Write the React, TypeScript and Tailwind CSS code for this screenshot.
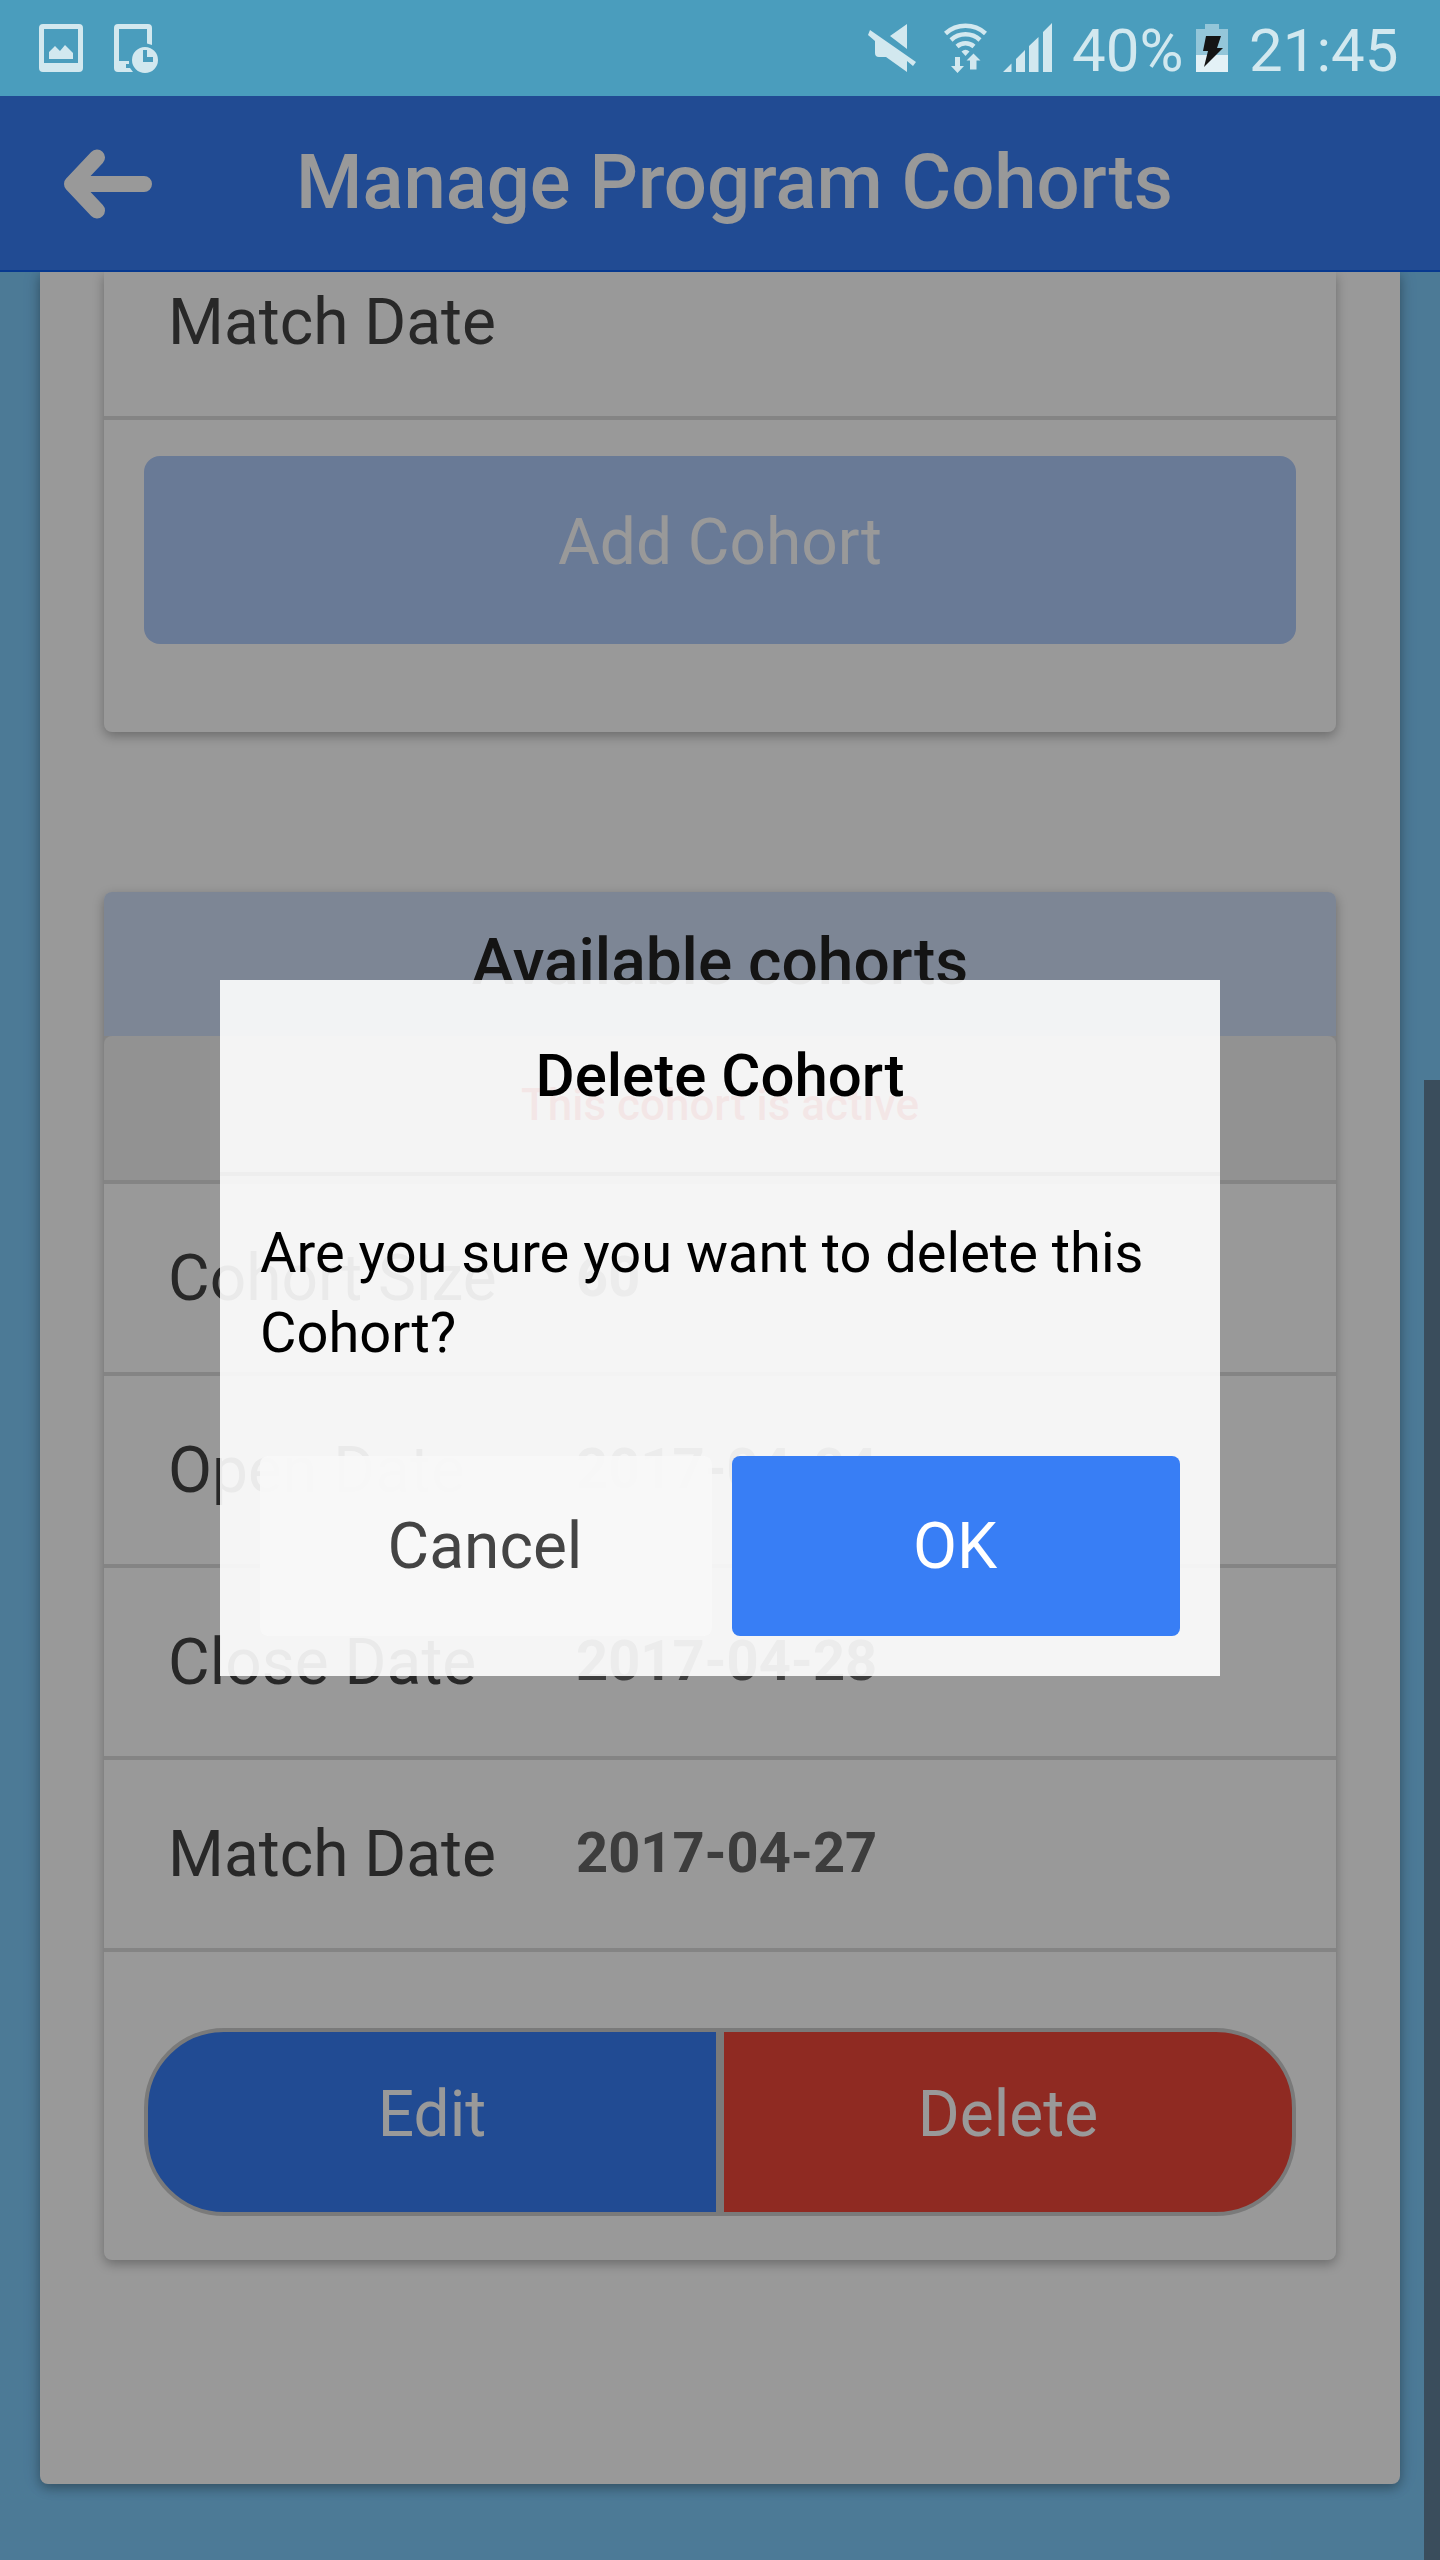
import React from "react";

function StatusBar() {
  return (
    <div className="flex h-24 shrink-0 items-start bg-[#4a9dbd] text-[#d2e8ef]">
      <svg className="h-24 w-[180px]" viewBox="0 0 180 96">
        <path fill="currentColor" fillRule="evenodd" d="M43 24h36a4 4 0 0 1 4 4v40a4 4 0 0 1-4 4H43a4 4 0 0 1-4-4V28a4 4 0 0 1 4-4zm1 5v34h34V29zM49 59v-7l6-6 5 5 5-6 8 8v6z" />
        <path fill="currentColor" d="M118 24h30a4 4 0 0 1 4 4v17l-5-1.500V29h-28v32h10v3h-3v4h4l3 4h-15a4 4 0 0 1-4-4V28a4 4 0 0 1 4-4z" />
        <path fill="currentColor" fillRule="evenodd" d="M145 47a13 13 0 1 1 0 26a13 13 0 0 1 0-26zm-2 3v12h10v-5h-6v-7z" />
      </svg>
      <svg className="ml-[660px] h-24 w-[220px]" viewBox="840 0 220 96">
        <g fill="currentColor">
          <path d="M907 24v25l-17-13zM870 30l46 32-3 4-6-5v11l-21-15h-7a4 4 0 0 1-4-4V41l-7-6z" />
        </g>
        <g fill="none" stroke="currentColor" strokeWidth="4.500">
          <path d="M945.500 33.500a30 30 0 0 1 40 0" />
          <path d="M951 40a21.500 21.500 0 0 1 29 0" />
          <path d="M957 46.500a13 13 0 0 1 17 0" />
        </g>
        <g fill="currentColor">
          <path d="M961.500 51.500q4-3.500 8 0l-4 4.500z" />
          <path d="M955 57h5v9h4l-6.500 7-6.500-7h4zM970 69.500h6.500v-9h4l-7-7-7 7h3.500z" />
          <path d="M1003 72h8.500v-8.500zM1016 72h9V50l-9 9zM1029 72h9.500V37l-9.500 9zM1043 72h9V23l-9 9z" />
        </g>
      </svg>
      <span className="ml-[12px] w-[112px] text-[60px] leading-[101px]">40%</span>
      <svg className="ml-[12px] h-24 w-8" viewBox="0 0 32 96">
        <path fill="#94c6d9" d="M0 29h9v-5h14v5h9v26H0z" />
        <path fill="#e3f1f6" d="M0 55h32v17H0z" />
        <path fill="#141414" d="M10 36h15l-4 12h6L8 67l4-16H7z" />
      </svg>
      <span className="ml-[21px] text-[60px] leading-[101px]">21:45</span>
    </div>
  );
}

function Header() {
  return (
    <div className="flex h-44 shrink-0 items-start border-b-2 border-[#0c60ee] bg-[#387ef5] text-white">
      <svg className="mt-[53px] ml-16 h-[70px] w-[88px]" viewBox="0 0 88 70">
        <path d="M33 8.500L8 35l25 26.500M8 35h72" fill="none" stroke="currentColor" strokeWidth="16" strokeLinecap="round" strokeLinejoin="round" />
      </svg>
      <h1 className="ml-36 text-[76px] leading-[172px] font-medium whitespace-nowrap">Manage Program Cohorts</h1>
    </div>
  );
}

function Row({ label, value }: { label: string; value: string }) {
  return (
    <div className="flex h-48 border-b-4 border-[#ddd] pl-16">
      <span className="w-[408px] text-[64px] leading-[190px] text-[#444]">{label}</span>
      <span className="text-[56px] leading-[186px] font-bold text-[#666]">{value}</span>
    </div>
  );
}

export default function App() {
  return (
    <div className="relative flex h-[2560px] w-[1440px] flex-col overflow-hidden bg-[#7fcbfb] font-['Roboto',sans-serif]">
      <StatusBar />
      <Header />
      <main className="h-[2288px] overflow-hidden px-10">
        <div className="h-[2212px] rounded-b-lg bg-white px-16 shadow-[0_4px_12px_rgba(0,0,0,0.3),0_0_20px_rgba(0,0,0,0.1)]">
          <section className="h-[460px] rounded-b-lg bg-white shadow-[0_4px_12px_rgba(0,0,0,0.3)]">
            <div className="h-[148px] border-b-4 border-[#ddd] pl-16 text-[64px] leading-[102px] text-[#444]">Match Date</div>
            <div className="px-10 pt-9">
              <button className="block h-[188px] w-full rounded-2xl bg-[#b0cbfb] pb-[15px] text-[64px] leading-[75px] text-white">Add Cohort</button>
            </div>
          </section>
          <section className="mt-40 h-[1368px] rounded-lg bg-white shadow-[0_4px_12px_rgba(0,0,0,0.3)]">
            <h2 className="h-36 rounded-t-lg bg-[#d0dff8] text-center text-[64px] leading-[142px] font-medium text-[#222]">Available cohorts</h2>
            <div className="bg-[#ddd]">
              <div className="h-[148px] rounded-t-lg border-b-4 border-[#ddd] bg-[#f3f3f3] text-center text-[44px] leading-[138px] font-medium text-red-600">This cohort is active</div>
            </div>
            <Row label="Cohort Size" value="60" />
            <Row label="Open Date" value="2017-04-04" />
            <Row label="Close Date" value="2017-04-28" />
            <Row label="Match Date" value="2017-04-27" />
            <div className="flex px-10 pt-[76px] text-[64px] leading-[75px] text-white">
              <button className="h-[188px] flex-1 rounded-l-[80px] border-4 border-[#ccc] bg-[#387ef5] pb-[15px]">Edit</button>
              <button className="h-[188px] flex-1 rounded-r-[80px] border-4 border-[#ccc] bg-[#ef473a] pb-[15px]">Delete</button>
            </div>
          </section>
        </div>
      </main>
      <div className="absolute top-[1080px] right-0 h-[1480px] w-4 bg-[#61819a]" />
      <div className="absolute inset-x-0 top-24 bottom-0 bg-black/40" />
      <div role="dialog" className="absolute top-[980px] left-[220px] h-[696px] w-[1000px] bg-white/90 text-black">
        <h3 className="h-[196px] border-b-4 border-[#eee] text-center text-[60px] leading-[192px] font-medium">Delete Cohort</h3>
        <p className="h-[280px] px-10 pt-[37px] text-[56px] leading-[80px]">Are you sure you want to delete this Cohort?</p>
        <div className="flex gap-5 px-10 text-[64px] leading-[75px]">
          <button className="h-[180px] w-[452px] rounded-lg bg-[#f8f8f8]/90 pt-px pr-0.5 text-[#444]">Cancel</button>
          <button className="h-[180px] w-[448px] rounded-lg bg-[#387ef5] pt-px pr-0.5 text-white">OK</button>
        </div>
      </div>
    </div>
  );
}
